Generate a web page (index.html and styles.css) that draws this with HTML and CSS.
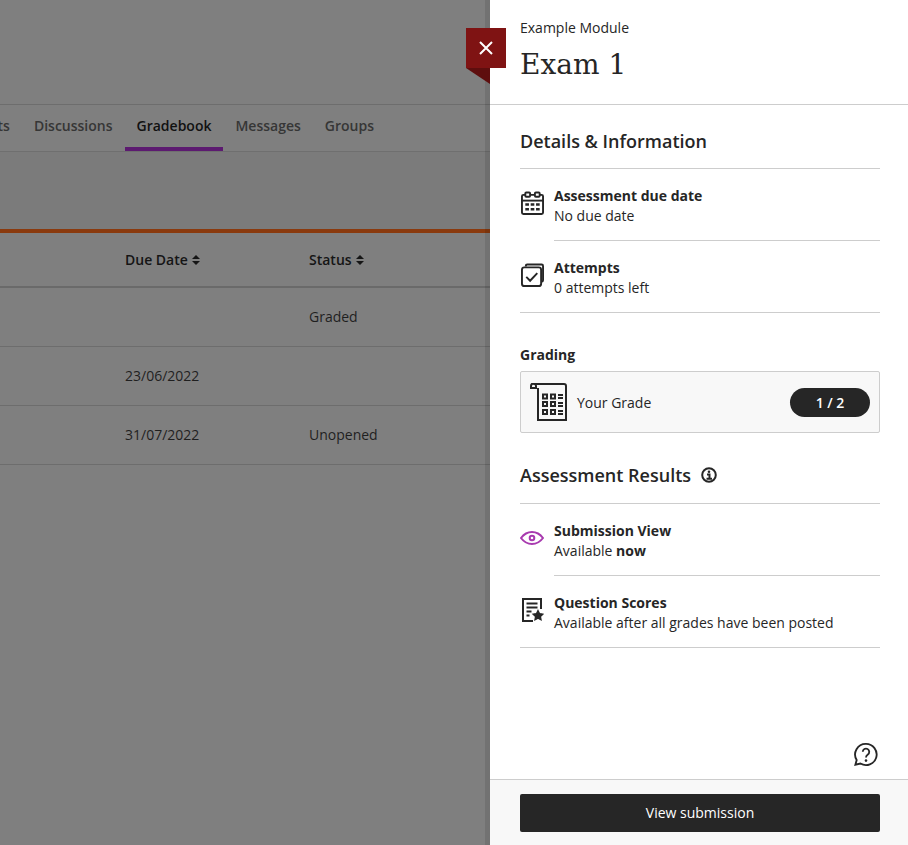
FILE: index.html
```html
<!DOCTYPE html>
<html lang="en">
<head>
<meta charset="utf-8">
<title>Exam 1</title>
<link rel="stylesheet" href="styles.css">
</head>
<body>
<div class="app">
  <main class="page">
    <div class="page-head"></div>
    <nav class="tabs">
      <span class="tab">Contents</span>
      <span class="tab">Discussions</span>
      <span class="tab tab-active">Gradebook</span>
      <span class="tab">Messages</span>
      <span class="tab">Groups</span>
    </nav>
    <div class="toolbar"></div>
    <div class="table">
      <div class="row row-head">
        <span></span>
        <span class="th">Due Date <svg class="sort" viewBox="0 0 8 10"><path d="M4 0l4 4H0zM4 10L0 6h8z"/></svg></span>
        <span class="th">Status <svg class="sort" viewBox="0 0 8 10"><path d="M4 0l4 4H0zM4 10L0 6h8z"/></svg></span>
      </div>
      <div class="row"><span></span><span></span><span>Graded</span></div>
      <div class="row"><span></span><span>23/06/2022</span><span></span></div>
      <div class="row"><span></span><span>31/07/2022</span><span>Unopened</span></div>
    </div>
  </main>
  <aside class="panel">
    <button class="close" aria-label="Close">
      <svg viewBox="0 0 14 14" width="14" height="14"><path d="M1 1l12 12M13 1L1 13"/></svg>
    </button>
    <svg class="fold" viewBox="0 0 24 16" width="24" height="16"><path d="M0 0h24v16z"/></svg>
    <header class="panel-head">
      <div class="crumb">Example Module</div>
      <h1 class="title">Exam 1</h1>
    </header>
    <div class="panel-body">
      <h2 class="section-title section-first">Details &amp; Information</h2>
      <ul class="items">
        <li class="item">
          <svg class="ico" viewBox="0 0 24 24"><rect x="1" y="3.500" width="22" height="20" rx="1.500"/><path d="M1 9.500h22"/><rect x="4.500" y="1" width="5" height="4.500" rx="1" class="ring"/><rect x="14.500" y="1" width="5" height="4.500" rx="1" class="ring"/><path class="dots" d="M4.500 13.500h3.800M10.100 13.500h3.800M15.700 13.500h3.800M4.500 18.500h3.800M10.100 18.500h3.800M15.700 18.500h3.800"/></svg>
          <div class="item-text"><strong>Assessment due date</strong><span>No due date</span></div>
        </li>
        <li class="item">
          <svg class="ico" viewBox="0 0 24 24"><path d="M5 3V2.500A1.500 1.500 0 0 1 6.500 1h15A1.500 1.500 0 0 1 23 2.500v15a1.500 1.500 0 0 1-1.500 1.500H21"/><rect x="1" y="4" width="20" height="19.500" rx="2.500"/><path d="M5.500 14l4 4L17 10"/></svg>
          <div class="item-text"><strong>Attempts</strong><span>0 attempts left</span></div>
        </li>
      </ul>
      <h3 class="grading-label">Grading</h3>
      <div class="grade-card">
        <svg class="ico-grade" viewBox="0 0 37 38"><path d="M1 5V3a2.500 2.500 0 0 1 5 0v2H1zM3.500 1H34a2 2 0 0 1 2 2V37H8V5"/><path class="dots" d="M13 11.500h4v4h-4zM21 11.500h4v4h-4zM13 19h4v4h-4zM21 19h4v4h-4zM13 27h4v4h-4zM21 27h4v4h-4zM28 12h5M28 15h5M28 20h5M28 23h5M28 28h5M28 31h5"/></svg>
        <span class="grade-label">Your Grade</span>
        <span class="grade-pill">1 / 2</span>
      </div>
      <h2 class="section-title section-results">Assessment Results
        <svg class="info" viewBox="0 0 16 16"><circle cx="8" cy="8" r="6.800"/><circle class="fill" cx="8" cy="4.700" r="1.300"/><path d="M6 7.500H8.500V11.500M5.500 11.800h5.500"/></svg>
      </h2>
      <ul class="items">
        <li class="item">
          <svg class="ico ico-eye" viewBox="0 0 24 14"><path d="M1 7c3-4 6.800-6 11-6s8 2 11 6c-3 4-6.800 6-11 6S4 11 1 7z"/><circle cx="12" cy="7" r="2.300"/></svg>
          <div class="item-text"><strong>Submission View</strong><span>Available <b>now</b></span></div>
        </li>
        <li class="item">
          <svg class="ico ico-score" viewBox="0 0 22 24"><path d="M11 23H1V1h18v10"/><path d="M4.500 5.500h11M4.500 9.500h11M4.500 13.500h5M4.500 17.500h3"/><path class="star" d="M16 12.500l1.500 3.100 3.500.5-2.500 2.400.6 3.500-3.100-1.700-3.100 1.700.6-3.500-2.500-2.400 3.500-.5z"/></svg>
          <div class="item-text"><strong>Question Scores</strong><span>Available after all grades have been posted</span></div>
        </li>
      </ul>
    </div>
    <div class="help-row">
      <svg class="help" viewBox="0 0 26 26"><path d="M13 1.500a11.500 11.500 0 1 1-6 21.300L1.500 24l1.400-5A11.500 11.500 0 0 1 13 1.500z"/><path d="M9.500 10a3.500 3.500 0 1 1 5.500 3c-1.300.9-2 1.500-2 3.200"/><circle class="fill" cx="13" cy="19.600" r="1.400"/></svg>
    </div>
    <footer class="panel-foot">
      <button class="primary">View submission</button>
    </footer>
  </aside>
</div>
</body>
</html>
```
FILE: styles.css
```css
* { box-sizing: border-box; }
html, body { margin: 0; height: 100%; }
body { font-family: "Open Sans", sans-serif; font-size: 14px; color: #262626; overflow: hidden; }
.app { display: flex; height: 845px; width: 908px; }

.page { width: 490px; flex: none; background: #7f7f7f; overflow: hidden; }
.page-head { height: 105px; border-bottom: 1px solid #6d6d6d; }
.tabs { display: flex; justify-content: flex-end; height: 47px; padding-right: 104px; border-bottom: 1px solid #6f6f6f; background: #7f7f7f; }
.tab { flex: none; padding: 0 12px; height: 46px; line-height: 42px; font-weight: 600; color: #363636; font-size: 14px; }
.tab-active { color: #111; border-bottom: 4px solid #5c1a70; font-weight: 550; }
.toolbar { height: 77px; background: #7b7b7b; }
.table { border-top: 4px solid #8a3a0e; }
.row { display: grid; grid-template-columns: 125px 184px 1fr; align-items: center; height: 59px; padding-bottom: 2px; border-bottom: 1px solid #6d6d6d; color: #1f1f1f; }
.row-head { height: 55px; padding-bottom: 0; border-bottom: 2px solid #6a6a6a; font-weight: 550; }
.th { display: flex; align-items: center; gap: 4px; color: #151515; }
.sort { width: 8px; height: 10px; fill: #151515; }

.panel { position: relative; flex: 1; display: flex; flex-direction: column; background: #fff; box-shadow: -5px 0 0 rgba(0,0,0,.1); }
.close { position: absolute; left: -24px; top: 28px; width: 40px; height: 40px; border: 0; padding: 0; background: #7f1313; display: flex; align-items: center; justify-content: center; }
.close path { stroke: #fff; stroke-width: 2; fill: none; }
.fold { position: absolute; left: -24px; top: 68px; }
.fold path { fill: #5e0e0e; }
.panel-head { height: 105px; padding: 18px 28px 0 30px; border-bottom: 1px solid #cdcdcd; }
.crumb { line-height: 20px; font-size: 14px; color: #262626; }
.title { margin: 7px 0 0; font-family: "DejaVu Serif", serif; font-weight: 400; font-size: 28px; line-height: 40px; color: #262626; }
.panel-body { flex: 1; padding: 0 28px 0 30px; }
.section-title { margin: 0; font-size: 18px; font-weight: 600; line-height: 26px; display: flex; align-items: center; gap: 10px; border-bottom: 1px solid #cdcdcd; }
.section-first { padding: 23px 0 14px; }
.section-results { padding: 0 0 15px; margin-top: 29px; }
.info { width: 16px; height: 16px; fill: none; stroke: #262626; stroke-width: 2; }
.info .fill { fill: #262626; stroke: none; }
.items { list-style: none; margin: 0; padding: 0; }
.item { position: relative; display: flex; gap: 0; height: 72px; padding-top: 17px; }
.item-text { flex: 1; display: flex; flex-direction: column; margin-left: 34px; height: 55px; font-size: 14px; line-height: 20px; }
.item-text strong { font-weight: 700; }
.item-text b { font-weight: 700; }
.item::after { content: ""; position: absolute; left: 34px; right: 0; bottom: 0; height: 1px; background: #cdcdcd; }
.item:last-child::after { left: 0; }
.ico { position: absolute; left: 1px; top: 22px; width: 23px; height: 24px; fill: none; stroke: #262626; stroke-width: 2; }
.ico .ring { fill: #fff; }
.ico .dots { stroke-width: 2.600; }
.ico-eye { top: 27px; width: 24px; height: 14px; stroke: #a83aaf; stroke-width: 2; left: 0; }
.ico-score { left: 2px; width: 22px; height: 24px; }
.ico-score .star { fill: #262626; stroke: #262626; stroke-width: 1.200; paint-order: stroke; }
.grading-label { margin: 32px 0 0; font-size: 14px; line-height: 20px; font-weight: 700; }
.grade-card { display: flex; align-items: center; height: 62px; margin-top: 6px; padding: 0 9px; background: #f8f8f8; border: 1px solid #cdcdcd; border-radius: 2px; }
.ico-grade { width: 37px; height: 38px; fill: none; stroke: #262626; stroke-width: 2; flex: none; }
.grade-label { margin-left: 10px; flex: 1; font-size: 14px; font-weight: 500; }
.grade-pill { width: 80px; height: 29px; border-radius: 15px; background: #262626; color: #fff; font-weight: 600; text-align: center; line-height: 29px; font-size: 14px; }
.help-row { display: flex; justify-content: flex-end; padding: 0 30px 12px 0; }
.help { width: 24px; height: 25px; fill: none; stroke: #262626; stroke-width: 2; }
.help .fill { fill: #262626; stroke: none; }
.panel-foot { height: 66px; padding: 14px 28px 0 30px; background: #f8f8f8; border-top: 1px solid #cdcdcd; }
.primary { width: 100%; height: 38px; border: 0; border-radius: 2px; background: #262626; color: #fff; font-family: inherit; font-size: 14px; font-weight: 500; padding: 0 0 2px; }
```
